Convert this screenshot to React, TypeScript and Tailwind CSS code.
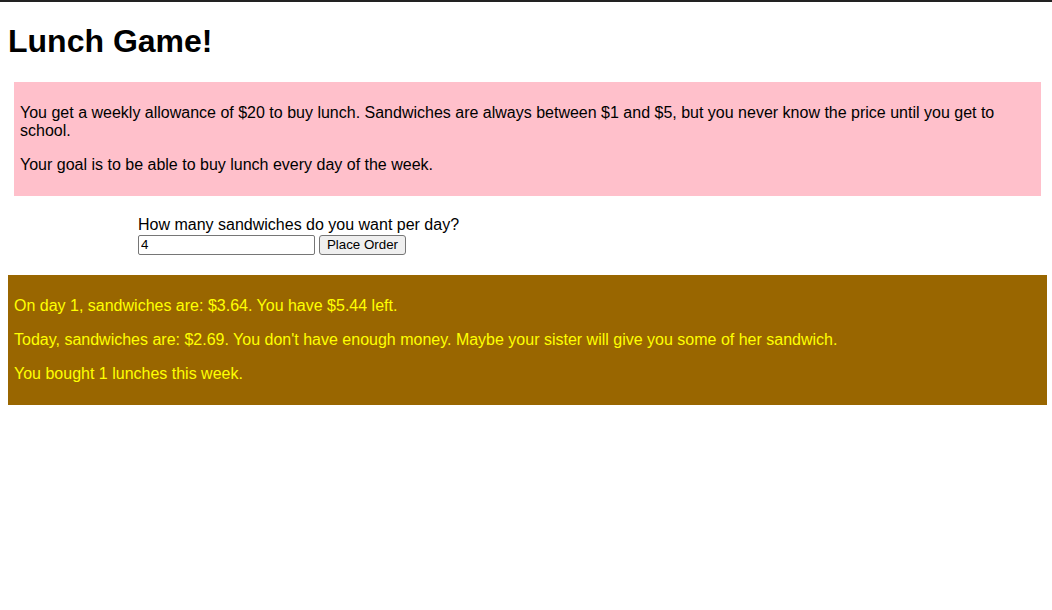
export default function App() {
  return (
    <div className="min-h-[610px] border-t-2 border-[#222] bg-white font-['Liberation_Sans',Arial,sans-serif] text-black">
      <div className="px-2">
        <h1 className="my-[21.44px] text-[32px] font-bold leading-[37px]">Lunch Game!</h1>

        <div className="ml-[6px] mr-[3px] bg-[#ffc0cb] p-[6px] text-base leading-[18px]">
          <p className="my-4">
            You get a weekly allowance of $20 to buy lunch. Sandwiches are always between $1 and $5, but you never know the price until you get to school.
          </p>
          <p className="my-4">Your goal is to be able to buy lunch every day of the week.</p>
        </div>

        <form className="ml-[130px] mt-[20px] mb-[20px] text-base leading-[18px]" onSubmit={(e) => e.preventDefault()}>
          <label htmlFor="count" className="block">
            How many sandwiches do you want per day?
          </label>
          <div className="flex h-[21px] items-end gap-[4px]">
            <input
              id="count"
              type="text"
              defaultValue="4"
              className="h-[20px] w-[177px] rounded-[2px] border border-[#767676] px-[2px] text-[13.33px] leading-none"
            />
            <button
              type="submit"
              className="h-[20px] w-[87px] rounded-[3px] border border-[#767676] bg-[#efefef] text-[13.33px] leading-none"
            >
              Place Order
            </button>
          </div>
        </form>

        <div className="mr-[-3px] bg-[#996600] p-[6px] text-base leading-[18px] text-[#ffff00]">
          <p className="my-4">On day 1, sandwiches are: $3.64. You have $5.44 left.</p>
          <p className="my-4">
            Today, sandwiches are: $2.69. You don't have enough money. Maybe your sister will give you some of her sandwich.
          </p>
          <p className="my-4">You bought 1 lunches this week.</p>
        </div>
      </div>
    </div>
  );
}
